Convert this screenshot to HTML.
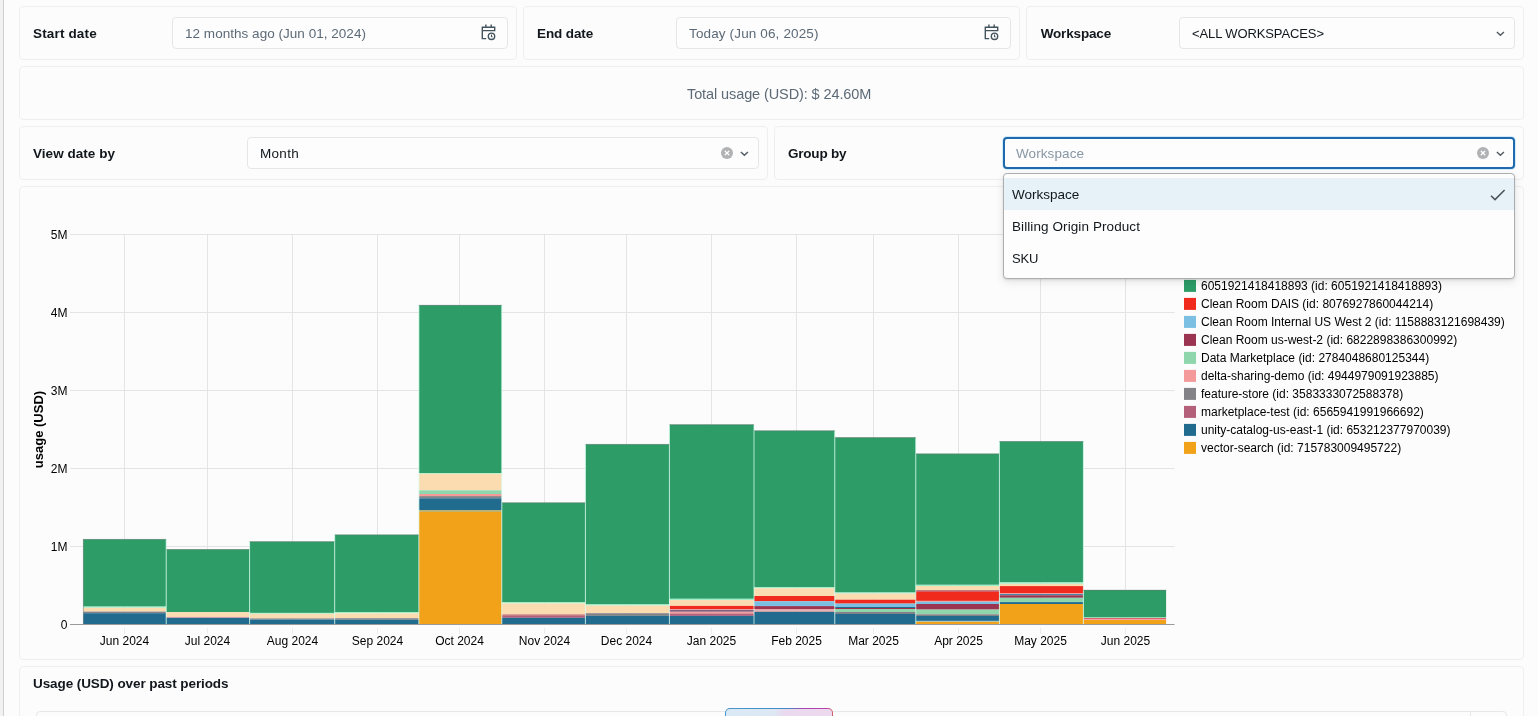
<!DOCTYPE html>
<html><head><meta charset="utf-8"><title>Usage dashboard</title>
<style>
*{box-sizing:border-box;margin:0;padding:0}
html,body{width:1538px;height:716px;overflow:hidden;background:#fcfcfc;font-family:"Liberation Sans",sans-serif;font-size:13px;color:#11171c}
#root{position:absolute;left:0;top:0;width:1538px;height:716px;will-change:transform}
.edge{position:absolute;left:0;top:0;width:4px;height:716px;background:#f2f2f2;border-right:1px solid #cdd0d3}
.card{position:absolute;border:1px solid #edeeef;border-radius:4px;background:#fcfcfc}
.lbl{position:absolute;left:13px;top:0;height:52px;line-height:53px;font-weight:bold;font-size:13.5px;white-space:nowrap}
.inp{position:absolute;top:10px;height:32px;border:1px solid #e4e6e8;border-radius:4px;background:#fdfdfd;line-height:31px;padding-left:12px;white-space:nowrap;font-size:13.5px}
.gray{color:#5c6a77}
.cal{position:absolute;right:10.2px;top:5.7px}
.chev{position:absolute;right:9.4px;top:12.7px}
.clr{position:absolute;right:24.8px;top:9px}
.total{position:absolute;left:667px;top:0;height:52px;line-height:54px;font-size:14.5px;color:#5c6a77;letter-spacing:-0.1px;white-space:nowrap}
.focus{border:2px solid #1f69ad;box-shadow:0 0 0 1px rgba(160,215,245,.45);line-height:29px;padding-left:11px;color:#8796a3;top:10px}
.focus .chev{right:8.4px;top:11.7px} .focus .clr{right:23.8px;top:8px}
.menu{position:absolute;left:1003px;top:173px;width:512px;height:106px;background:#fdfdfd;border:1px solid #acaeb0;border-radius:4px;box-shadow:0 3px 8px rgba(0,0,0,.10),0 1px 2px rgba(0,0,0,.10);padding:4px 0}
.opt{height:32px;line-height:33px;padding-left:8px;font-size:13.5px;position:relative;white-space:nowrap}
.opt.sel{background:#e6f1f8}
.chk{position:absolute;right:8px;top:11px}
.chart{position:absolute;left:0;top:0}
.ax{font-family:"Liberation Sans",sans-serif;font-size:12px;fill:#000}
.lg{font-family:"Liberation Sans",sans-serif;font-size:12px;fill:#000}
.ayt{font-family:"Liberation Sans",sans-serif;font-size:13px;font-weight:bold;fill:#000}
.h{position:absolute;left:13px;top:9px;font-weight:bold;font-size:13.5px;letter-spacing:-0.09px;white-space:nowrap}
.inner{position:absolute;left:16px;top:44px;width:1471px;height:60px;border:1px solid #e6e8ea;border-radius:4px}
.inner i{position:absolute;left:1433px;top:0;width:1px;height:60px;background:#e6e8ea}
.pill{position:absolute;left:725px;top:708px;width:108px;height:30px;border-radius:5px;padding:1px;background:linear-gradient(90deg,#4a95cc 0%,#3f8dc8 58%,#a846b4 72%,#b644b0 93%,#d0605c 100%)}
.pill b{display:block;width:100%;height:100%;border-radius:4px;background:linear-gradient(90deg,#d9e9f5 0%,#dde8f3 45%,#ead9ee 55%,#edd9ee 100%)}
</style></head><body>
<div id="root"><div class="edge"></div>

<div class="card" style="left:19px;top:6px;width:498px;height:54px"><div class="lbl" style="letter-spacing:.16px">Start date</div>
 <div class="inp gray" style="left:152px;width:336px"><span id="t1" style="letter-spacing:.03px">12 months ago (Jun 01, 2024)</span><svg class="cal" width="16" height="17" viewBox="0 0 16 17" fill="none" stroke="#44545f" stroke-width="1.4" stroke-linecap="butt" stroke-linejoin="miter"><path d="M4.9 0.5v2.7M10.2 0.5v2.7M5.2 14.6H1.3V3.2h12.4v4.1M1.3 6.6h12.4"/><circle cx="10.5" cy="12.3" r="3.2"/><path d="M10.5 10.6v1.9l1 .6" stroke-width="1.1"/></svg></div></div>
<div class="card" style="left:523px;top:6px;width:497px;height:54px"><div class="lbl" style="letter-spacing:-.12px">End date</div>
 <div class="inp gray" style="left:152px;width:335px"><span id="t2" style="letter-spacing:.14px">Today (Jun 06, 2025)</span><svg class="cal" width="16" height="17" viewBox="0 0 16 17" fill="none" stroke="#44545f" stroke-width="1.4" stroke-linecap="butt" stroke-linejoin="miter"><path d="M4.9 0.5v2.7M10.2 0.5v2.7M5.2 14.6H1.3V3.2h12.4v4.1M1.3 6.6h12.4"/><circle cx="10.5" cy="12.3" r="3.2"/><path d="M10.5 10.6v1.9l1 .6" stroke-width="1.1"/></svg></div></div>
<div class="card" style="left:1026px;top:6px;width:498px;height:54px"><div class="lbl" style="letter-spacing:-.16px;left:13.7px">Workspace</div>
 <div class="inp" style="left:152px;width:336px"><span id="t3" style="font-size:13px;letter-spacing:-.11px">&lt;ALL WORKSPACES&gt;</span><svg class="chev" width="9" height="6" viewBox="0 0 9 6" fill="none" stroke="#525a62" stroke-width="1.4" stroke-linecap="butt" stroke-linejoin="miter"><path d="M0.9 0.9l3.5 3.4L7.9 0.9"/></svg></div></div>

<div class="card" style="left:19px;top:66px;width:1505px;height:54px"><div class="total"><span id="t4">Total usage (USD): $ 24.60M</span></div></div>

<div class="card" style="left:19px;top:126px;width:749px;height:54px"><div class="lbl" style="letter-spacing:.04px">View date by</div>
 <div class="inp" style="left:227px;width:512px"><span id="t5" style="letter-spacing:.3px">Month</span><svg class="clr" width="12" height="12" viewBox="0 0 12 12"><circle cx="6" cy="6" r="6" fill="#b0b2b4"/><path d="M4.2 4.2l3.6 3.6M7.8 4.2l-3.6 3.6" stroke="#fff" stroke-width="1.25" stroke-linecap="round"/></svg><svg class="chev" width="9" height="6" viewBox="0 0 9 6" fill="none" stroke="#525a62" stroke-width="1.4" stroke-linecap="butt" stroke-linejoin="miter"><path d="M0.9 0.9l3.5 3.4L7.9 0.9"/></svg></div></div>
<div class="card" style="left:774px;top:126px;width:750px;height:54px"><div class="lbl" style="letter-spacing:-.21px">Group by</div>
 <div class="inp focus" style="left:228px;width:512px"><span id="t6" style="letter-spacing:.09px">Workspace</span><svg class="clr" width="12" height="12" viewBox="0 0 12 12"><circle cx="6" cy="6" r="6" fill="#b0b2b4"/><path d="M4.2 4.2l3.6 3.6M7.8 4.2l-3.6 3.6" stroke="#fff" stroke-width="1.25" stroke-linecap="round"/></svg><svg class="chev" width="9" height="6" viewBox="0 0 9 6" fill="none" stroke="#525a62" stroke-width="1.4" stroke-linecap="butt" stroke-linejoin="miter"><path d="M0.9 0.9l3.5 3.4L7.9 0.9"/></svg></div></div>

<div class="card" style="left:19px;top:186px;width:1505px;height:474px"><svg class="chart" width="1503" height="472" viewBox="20 187 1503 472">
<line x1="124.5" y1="234" x2="124.5" y2="624" stroke="#e4e4e4" stroke-width="1"/>
<line x1="207.5" y1="234" x2="207.5" y2="624" stroke="#e4e4e4" stroke-width="1"/>
<line x1="292.5" y1="234" x2="292.5" y2="624" stroke="#e4e4e4" stroke-width="1"/>
<line x1="377.5" y1="234" x2="377.5" y2="624" stroke="#e4e4e4" stroke-width="1"/>
<line x1="459.5" y1="234" x2="459.5" y2="624" stroke="#e4e4e4" stroke-width="1"/>
<line x1="544.5" y1="234" x2="544.5" y2="624" stroke="#e4e4e4" stroke-width="1"/>
<line x1="626.5" y1="234" x2="626.5" y2="624" stroke="#e4e4e4" stroke-width="1"/>
<line x1="711.5" y1="234" x2="711.5" y2="624" stroke="#e4e4e4" stroke-width="1"/>
<line x1="796.5" y1="234" x2="796.5" y2="624" stroke="#e4e4e4" stroke-width="1"/>
<line x1="873.5" y1="234" x2="873.5" y2="624" stroke="#e4e4e4" stroke-width="1"/>
<line x1="958.5" y1="234" x2="958.5" y2="624" stroke="#e4e4e4" stroke-width="1"/>
<line x1="1040.5" y1="234" x2="1040.5" y2="624" stroke="#e4e4e4" stroke-width="1"/>
<line x1="1125.5" y1="234" x2="1125.5" y2="624" stroke="#e4e4e4" stroke-width="1"/>
<line x1="70" y1="234.5" x2="1174.5" y2="234.5" stroke="#e4e4e4" stroke-width="1"/>
<line x1="70" y1="312.5" x2="1174.5" y2="312.5" stroke="#e4e4e4" stroke-width="1"/>
<line x1="70" y1="390.5" x2="1174.5" y2="390.5" stroke="#e4e4e4" stroke-width="1"/>
<line x1="70" y1="468.5" x2="1174.5" y2="468.5" stroke="#e4e4e4" stroke-width="1"/>
<line x1="70" y1="546.5" x2="1174.5" y2="546.5" stroke="#e4e4e4" stroke-width="1"/>
<rect x="83.2" y="539.2" width="83.0" height="67.4" fill="#2d9c67"/>
<rect x="83.2" y="606.6" width="83.0" height="1.2" fill="#9df0c8"/>
<rect x="83.2" y="607.8" width="83.0" height="3.8" fill="#fadcb0"/>
<rect x="83.2" y="611.6" width="83.0" height="1.6" fill="#828287"/>
<rect x="83.2" y="613.2" width="83.0" height="10.8" fill="#216b8f"/>
<rect x="166.2" y="549.3" width="83.4" height="62.9" fill="#2d9c67"/>
<rect x="166.2" y="612.2" width="83.4" height="4.6" fill="#fadcb0"/>
<rect x="166.2" y="616.8" width="83.4" height="1.0" fill="#f59a9a"/>
<rect x="166.2" y="617.8" width="83.4" height="6.2" fill="#216b8f"/>
<rect x="249.6" y="541.5" width="85.1" height="71.4" fill="#2d9c67"/>
<rect x="249.6" y="612.9" width="85.1" height="0.9" fill="#9df0c8"/>
<rect x="249.6" y="613.8" width="85.1" height="4.6" fill="#fadcb0"/>
<rect x="249.6" y="618.4" width="85.1" height="1.2" fill="#828287"/>
<rect x="249.6" y="619.6" width="85.1" height="4.4" fill="#216b8f"/>
<rect x="334.7" y="534.7" width="84.2" height="77.5" fill="#2d9c67"/>
<rect x="334.7" y="612.2" width="84.2" height="1.1" fill="#9df0c8"/>
<rect x="334.7" y="613.3" width="84.2" height="4.9" fill="#fadcb0"/>
<rect x="334.7" y="618.2" width="84.2" height="1.5" fill="#828287"/>
<rect x="334.7" y="619.7" width="84.2" height="4.3" fill="#216b8f"/>
<rect x="418.9" y="305.1" width="82.9" height="167.9" fill="#2d9c67"/>
<rect x="418.9" y="473.0" width="82.9" height="0.8" fill="#9df0c8"/>
<rect x="418.9" y="473.8" width="82.9" height="16.5" fill="#fadcb0"/>
<rect x="418.9" y="490.3" width="82.9" height="3.7" fill="#8fd6ad"/>
<rect x="418.9" y="494.0" width="82.9" height="2.1" fill="#f59a9a"/>
<rect x="418.9" y="496.1" width="82.9" height="2.2" fill="#828287"/>
<rect x="418.9" y="498.3" width="82.9" height="11.8" fill="#216b8f"/>
<rect x="418.9" y="510.1" width="82.9" height="1.8" fill="#b5ac6a"/>
<rect x="418.9" y="511.9" width="82.9" height="112.1" fill="#f2a218"/>
<rect x="501.8" y="502.6" width="83.6" height="99.7" fill="#2d9c67"/>
<rect x="501.8" y="602.3" width="83.6" height="1.1" fill="#9df0c8"/>
<rect x="501.8" y="603.4" width="83.6" height="10.9" fill="#fadcb0"/>
<rect x="501.8" y="614.3" width="83.6" height="1.7" fill="#c97c80"/>
<rect x="501.8" y="616.0" width="83.6" height="1.8" fill="#b5607a"/>
<rect x="501.8" y="617.8" width="83.6" height="6.2" fill="#216b8f"/>
<rect x="585.4" y="444.2" width="84.0" height="160.2" fill="#2d9c67"/>
<rect x="585.4" y="604.4" width="84.0" height="1.2" fill="#9df0c8"/>
<rect x="585.4" y="605.6" width="84.0" height="7.6" fill="#fadcb0"/>
<rect x="585.4" y="613.2" width="84.0" height="2.7" fill="#828287"/>
<rect x="585.4" y="615.9" width="84.0" height="8.1" fill="#216b8f"/>
<rect x="669.4" y="424.5" width="84.6" height="174.3" fill="#2d9c67"/>
<rect x="669.4" y="598.8" width="84.6" height="1.3" fill="#9df0c8"/>
<rect x="669.4" y="600.1" width="84.6" height="5.8" fill="#fadcb0"/>
<rect x="669.4" y="605.9" width="84.6" height="3.3" fill="#f02b1d"/>
<rect x="669.4" y="609.2" width="84.6" height="0.7" fill="#f59a9a"/>
<rect x="669.4" y="609.9" width="84.6" height="1.9" fill="#7f6080"/>
<rect x="669.4" y="611.8" width="84.6" height="1.7" fill="#f59a9a"/>
<rect x="669.4" y="613.5" width="84.6" height="2.4" fill="#b5607a"/>
<rect x="669.4" y="615.9" width="84.6" height="8.1" fill="#216b8f"/>
<rect x="754.0" y="430.6" width="80.8" height="156.7" fill="#2d9c67"/>
<rect x="754.0" y="587.3" width="80.8" height="0.9" fill="#9df0c8"/>
<rect x="754.0" y="588.2" width="80.8" height="7.8" fill="#fadcb0"/>
<rect x="754.0" y="596.0" width="80.8" height="5.3" fill="#f02b1d"/>
<rect x="754.0" y="601.3" width="80.8" height="4.8" fill="#7bbfe2"/>
<rect x="754.0" y="606.1" width="80.8" height="3.2" fill="#9a3450"/>
<rect x="754.0" y="609.3" width="80.8" height="1.1" fill="#f59a9a"/>
<rect x="754.0" y="610.4" width="80.8" height="1.6" fill="#c9a0a8"/>
<rect x="754.0" y="612.0" width="80.8" height="12.0" fill="#216b8f"/>
<rect x="834.8" y="437.4" width="81.0" height="155.1" fill="#2d9c67"/>
<rect x="834.8" y="592.5" width="81.0" height="1.1" fill="#9df0c8"/>
<rect x="834.8" y="593.6" width="81.0" height="6.1" fill="#fadcb0"/>
<rect x="834.8" y="599.7" width="81.0" height="3.9" fill="#f02b1d"/>
<rect x="834.8" y="603.6" width="81.0" height="3.4" fill="#7bbfe2"/>
<rect x="834.8" y="607.0" width="81.0" height="1.0" fill="#216b8f"/>
<rect x="834.8" y="608.0" width="81.0" height="1.0" fill="#9a3450"/>
<rect x="834.8" y="609.0" width="81.0" height="3.0" fill="#8fd6ad"/>
<rect x="834.8" y="612.0" width="81.0" height="2.0" fill="#828287"/>
<rect x="834.8" y="614.0" width="81.0" height="10.0" fill="#216b8f"/>
<rect x="915.8" y="453.7" width="83.6" height="131.1" fill="#2d9c67"/>
<rect x="915.8" y="584.8" width="83.6" height="1.2" fill="#9df0c8"/>
<rect x="915.8" y="586.0" width="83.6" height="4.4" fill="#fadcb0"/>
<rect x="915.8" y="590.4" width="83.6" height="1.2" fill="#9a3450"/>
<rect x="915.8" y="591.6" width="83.6" height="9.3" fill="#f02b1d"/>
<rect x="915.8" y="600.9" width="83.6" height="0.9" fill="#f59a9a"/>
<rect x="915.8" y="601.8" width="83.6" height="2.2" fill="#7bbfe2"/>
<rect x="915.8" y="604.0" width="83.6" height="5.6" fill="#9a3450"/>
<rect x="915.8" y="609.6" width="83.6" height="4.7" fill="#8fd6ad"/>
<rect x="915.8" y="614.3" width="83.6" height="1.7" fill="#828287"/>
<rect x="915.8" y="616.0" width="83.6" height="4.9" fill="#216b8f"/>
<rect x="915.8" y="620.9" width="83.6" height="0.8" fill="#7bbfe2"/>
<rect x="915.8" y="621.7" width="83.6" height="2.3" fill="#f2a218"/>
<rect x="999.4" y="441.3" width="84.0" height="141.1" fill="#2d9c67"/>
<rect x="999.4" y="582.4" width="84.0" height="1.4" fill="#9df0c8"/>
<rect x="999.4" y="583.8" width="84.0" height="2.3" fill="#fadcb0"/>
<rect x="999.4" y="586.1" width="84.0" height="7.0" fill="#f02b1d"/>
<rect x="999.4" y="593.1" width="84.0" height="1.1" fill="#f59a9a"/>
<rect x="999.4" y="594.2" width="84.0" height="1.1" fill="#216b8f"/>
<rect x="999.4" y="595.3" width="84.0" height="2.5" fill="#9a3450"/>
<rect x="999.4" y="597.8" width="84.0" height="4.3" fill="#8fd6ad"/>
<rect x="999.4" y="602.1" width="84.0" height="1.9" fill="#216b8f"/>
<rect x="999.4" y="604.0" width="84.0" height="20.0" fill="#f2a218"/>
<rect x="1083.4" y="590.0" width="82.7" height="27.2" fill="#2d9c67"/>
<rect x="1083.4" y="617.2" width="82.7" height="0.8" fill="#8fd6ad"/>
<rect x="1083.4" y="618.0" width="82.7" height="1.2" fill="#e06070"/>
<rect x="1083.4" y="619.2" width="82.7" height="0.8" fill="#f59a9a"/>
<rect x="1083.4" y="620.0" width="82.7" height="4.0" fill="#f2a218"/>
<line x1="166.2" y1="539.2" x2="166.2" y2="624.0" stroke="#d8fff0" stroke-opacity="0.75" stroke-width="1"/>
<line x1="249.6" y1="541.5" x2="249.6" y2="624.0" stroke="#d8fff0" stroke-opacity="0.75" stroke-width="1"/>
<line x1="334.7" y1="534.7" x2="334.7" y2="624.0" stroke="#d8fff0" stroke-opacity="0.75" stroke-width="1"/>
<line x1="418.9" y1="305.1" x2="418.9" y2="624.0" stroke="#d8fff0" stroke-opacity="0.75" stroke-width="1"/>
<line x1="501.8" y1="305.1" x2="501.8" y2="624.0" stroke="#d8fff0" stroke-opacity="0.75" stroke-width="1"/>
<line x1="585.4" y1="444.2" x2="585.4" y2="624.0" stroke="#d8fff0" stroke-opacity="0.75" stroke-width="1"/>
<line x1="669.4" y1="424.5" x2="669.4" y2="624.0" stroke="#d8fff0" stroke-opacity="0.75" stroke-width="1"/>
<line x1="754.0" y1="424.5" x2="754.0" y2="624.0" stroke="#d8fff0" stroke-opacity="0.75" stroke-width="1"/>
<line x1="834.8" y1="430.6" x2="834.8" y2="624.0" stroke="#d8fff0" stroke-opacity="0.75" stroke-width="1"/>
<line x1="915.8" y1="437.4" x2="915.8" y2="624.0" stroke="#d8fff0" stroke-opacity="0.75" stroke-width="1"/>
<line x1="999.4" y1="441.3" x2="999.4" y2="624.0" stroke="#d8fff0" stroke-opacity="0.75" stroke-width="1"/>
<line x1="1083.4" y1="441.3" x2="1083.4" y2="624.0" stroke="#d8fff0" stroke-opacity="0.75" stroke-width="1"/>
<line x1="83.2" y1="539.4" x2="166.2" y2="539.4" stroke="#7a6f78" stroke-opacity="0.7" stroke-width="0.6"/>
<line x1="166.2" y1="549.5" x2="249.6" y2="549.5" stroke="#7a6f78" stroke-opacity="0.7" stroke-width="0.6"/>
<line x1="249.6" y1="541.7" x2="334.7" y2="541.7" stroke="#7a6f78" stroke-opacity="0.7" stroke-width="0.6"/>
<line x1="334.7" y1="534.9" x2="418.9" y2="534.9" stroke="#7a6f78" stroke-opacity="0.7" stroke-width="0.6"/>
<line x1="418.9" y1="305.3" x2="501.8" y2="305.3" stroke="#7a6f78" stroke-opacity="0.7" stroke-width="0.6"/>
<line x1="501.8" y1="502.8" x2="585.4" y2="502.8" stroke="#7a6f78" stroke-opacity="0.7" stroke-width="0.6"/>
<line x1="585.4" y1="444.4" x2="669.4" y2="444.4" stroke="#7a6f78" stroke-opacity="0.7" stroke-width="0.6"/>
<line x1="669.4" y1="424.7" x2="754.0" y2="424.7" stroke="#7a6f78" stroke-opacity="0.7" stroke-width="0.6"/>
<line x1="754.0" y1="430.8" x2="834.8" y2="430.8" stroke="#7a6f78" stroke-opacity="0.7" stroke-width="0.6"/>
<line x1="834.8" y1="437.6" x2="915.8" y2="437.6" stroke="#7a6f78" stroke-opacity="0.7" stroke-width="0.6"/>
<line x1="915.8" y1="453.9" x2="999.4" y2="453.9" stroke="#7a6f78" stroke-opacity="0.7" stroke-width="0.6"/>
<line x1="999.4" y1="441.5" x2="1083.4" y2="441.5" stroke="#7a6f78" stroke-opacity="0.7" stroke-width="0.6"/>
<line x1="1083.4" y1="590.2" x2="1166.1" y2="590.2" stroke="#7a6f78" stroke-opacity="0.7" stroke-width="0.6"/>
<line x1="83.4" y1="539.2" x2="83.4" y2="624" stroke="#6e7478" stroke-opacity="0.7" stroke-width="0.7"/>
<line x1="70" y1="624.5" x2="1174.5" y2="624.5" stroke="#9a9a9a" stroke-width="1"/>
<line x1="124.5" y1="628" x2="124.5" y2="634" stroke="#ececec" stroke-width="1"/>
<line x1="207.5" y1="628" x2="207.5" y2="634" stroke="#ececec" stroke-width="1"/>
<line x1="292.5" y1="628" x2="292.5" y2="634" stroke="#ececec" stroke-width="1"/>
<line x1="377.5" y1="628" x2="377.5" y2="634" stroke="#ececec" stroke-width="1"/>
<line x1="459.5" y1="628" x2="459.5" y2="634" stroke="#ececec" stroke-width="1"/>
<line x1="544.5" y1="628" x2="544.5" y2="634" stroke="#ececec" stroke-width="1"/>
<line x1="626.5" y1="628" x2="626.5" y2="634" stroke="#ececec" stroke-width="1"/>
<line x1="711.5" y1="628" x2="711.5" y2="634" stroke="#ececec" stroke-width="1"/>
<line x1="796.5" y1="628" x2="796.5" y2="634" stroke="#ececec" stroke-width="1"/>
<line x1="873.5" y1="628" x2="873.5" y2="634" stroke="#ececec" stroke-width="1"/>
<line x1="958.5" y1="628" x2="958.5" y2="634" stroke="#ececec" stroke-width="1"/>
<line x1="1040.5" y1="628" x2="1040.5" y2="634" stroke="#ececec" stroke-width="1"/>
<line x1="1125.5" y1="628" x2="1125.5" y2="634" stroke="#ececec" stroke-width="1"/>
<text x="124.5" y="645.2" text-anchor="middle" class="ax">Jun 2024</text>
<text x="207.5" y="645.2" text-anchor="middle" class="ax">Jul 2024</text>
<text x="292.5" y="645.2" text-anchor="middle" class="ax">Aug 2024</text>
<text x="377.5" y="645.2" text-anchor="middle" class="ax">Sep 2024</text>
<text x="459.5" y="645.2" text-anchor="middle" class="ax">Oct 2024</text>
<text x="544.5" y="645.2" text-anchor="middle" class="ax">Nov 2024</text>
<text x="626.5" y="645.2" text-anchor="middle" class="ax">Dec 2024</text>
<text x="711.5" y="645.2" text-anchor="middle" class="ax">Jan 2025</text>
<text x="796.5" y="645.2" text-anchor="middle" class="ax">Feb 2025</text>
<text x="873.5" y="645.2" text-anchor="middle" class="ax">Mar 2025</text>
<text x="958.5" y="645.2" text-anchor="middle" class="ax">Apr 2025</text>
<text x="1040.5" y="645.2" text-anchor="middle" class="ax">May 2025</text>
<text x="1125.5" y="645.2" text-anchor="middle" class="ax">Jun 2025</text>
<text x="67.5" y="239.3" text-anchor="end" class="ax">5M</text>
<text x="67.5" y="317.3" text-anchor="end" class="ax">4M</text>
<text x="67.5" y="395.3" text-anchor="end" class="ax">3M</text>
<text x="67.5" y="473.3" text-anchor="end" class="ax">2M</text>
<text x="67.5" y="551.3" text-anchor="end" class="ax">1M</text>
<text x="67.5" y="629.3" text-anchor="end" class="ax">0</text>
<text transform="translate(43.2,429.5) rotate(-90)" text-anchor="middle" class="ayt">usage (USD)</text>
<rect x="1184" y="279.9" width="12" height="12" fill="#2d9c67"/>
<text x="1201" y="289.9" class="lg">6051921418418893 (id: 6051921418418893)</text>
<rect x="1184" y="297.9" width="12" height="12" fill="#f02b1d"/>
<text x="1201" y="307.9" class="lg">Clean Room DAIS (id: 8076927860044214)</text>
<rect x="1184" y="315.9" width="12" height="12" fill="#7bbfe2"/>
<text x="1201" y="325.9" class="lg">Clean Room Internal US West 2 (id: 1158883121698439)</text>
<rect x="1184" y="333.9" width="12" height="12" fill="#9a3450"/>
<text x="1201" y="343.9" class="lg">Clean Room us-west-2 (id: 6822898386300992)</text>
<rect x="1184" y="351.9" width="12" height="12" fill="#8fd6ad"/>
<text x="1201" y="361.9" class="lg">Data Marketplace (id: 2784048680125344)</text>
<rect x="1184" y="369.9" width="12" height="12" fill="#f59a9a"/>
<text x="1201" y="379.9" class="lg">delta-sharing-demo (id: 4944979091923885)</text>
<rect x="1184" y="387.9" width="12" height="12" fill="#828287"/>
<text x="1201" y="397.9" class="lg">feature-store (id: 3583333072588378)</text>
<rect x="1184" y="405.9" width="12" height="12" fill="#b5607a"/>
<text x="1201" y="415.9" class="lg">marketplace-test (id: 6565941991966692)</text>
<rect x="1184" y="423.9" width="12" height="12" fill="#216b8f"/>
<text x="1201" y="433.9" class="lg">unity-catalog-us-east-1 (id: 653212377970039)</text>
<rect x="1184" y="441.9" width="12" height="12" fill="#f2a218"/>
<text x="1201" y="451.9" class="lg">vector-search (id: 715783009495722)</text>
</svg></div>

<div class="card" style="left:19px;top:666px;width:1505px;height:120px"><div class="h">Usage (USD) over past periods</div><div class="inner"><i></i></div></div>
<div class="pill"><b></b></div>

<div class="menu"><div class="opt sel">Workspace<svg class="chk" width="16" height="12" viewBox="0 0 16 12" fill="none" stroke="#4b5157" stroke-width="1.5" stroke-linecap="butt" stroke-linejoin="miter"><path d="M1 6.8l4 3.8L14.6 1"/></svg></div><div class="opt" style="letter-spacing:.09px">Billing Origin Product</div><div class="opt" style="font-size:13px;letter-spacing:-.22px">SKU</div></div>
</div></body></html>
